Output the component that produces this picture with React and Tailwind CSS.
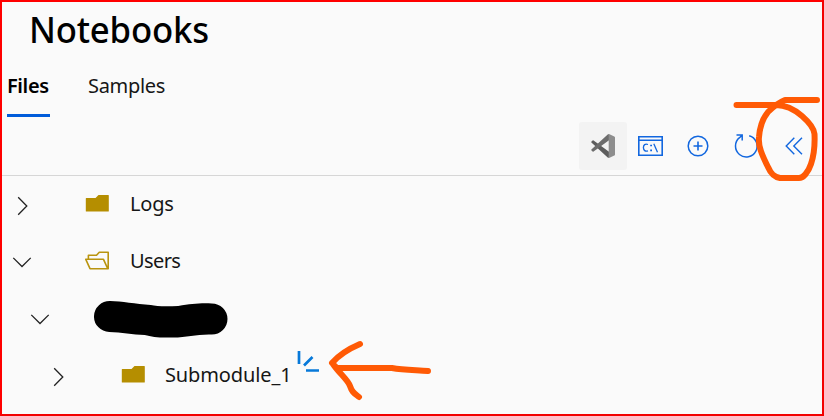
import React from "react";

const Folder = () => (
  <svg className="block h-[20px] w-[26px] shrink-0" viewBox="0 0 26 20">
    <path d="M.8 4.500Q.8 4 1.300 4H10.500L13.500 1H23.300Q23.800 1 23.800 1.500V17Q23.800 17.500 23.300 17.500H1.300Q.8 17.500 .8 17Z" fill="#b58e00" />
  </svg>
);

const OpenFolder = () => (
  <svg className="block h-[20px] w-[26px] shrink-0" viewBox="0 0 26 20" fill="none" stroke="#b9940f" strokeWidth="1.600" strokeLinejoin="round">
    <path d="M3.400 8.300V4.300H11.500L14.300 1.200H23.200V17.700H5L.8 8.300H18.500L22.600 17.300" />
  </svg>
);

const Chevron = ({ down }) => (
  <svg className="block size-[20px] shrink-0" viewBox="0 0 20 20" fill="none" stroke="#222" strokeWidth="1.300">
    {down ? <path d="M1.300 5.900L10 14.500L18.700 5.900" /> : <path d="M5.200 1.300L13.800 10L5.200 18.700" />}
  </svg>
);

const CodeLogo = () => (
  <svg className="size-[24px]" viewBox="0 0 24 24">
    <path d="M.4 8.500Q0 8 .5 7.500L1.600 6.400Q2 6 2.600 6.400L18 17.700V24L16.700 23.400Z" fill="#5d5d5d" />
    <path d="M.4 15.500Q0 16 .5 16.500L1.600 17.600Q2 18 2.600 17.600L18 6.300V0L16.700 .6Z" fill="#6d6d6d" />
    <path d="M18 .1L23.300 2.400Q24 2.700 24 3.500V20.500Q24 21.300 23.300 21.600L18 23.900Q17.200 23.900 16.700 23.300Q17.700 23.500 17.700 22V2Q17.700 .5 16.700 .7Q17.200 0 18 .1Z" fill="#8d8d8d" />
  </svg>
);

const Terminal = () => (
  <svg className="mr-[1px] h-[20px] w-[25px]" viewBox="0 0 25 20" fill="none" stroke="#1267df">
    <path d="M.8.800H24.200V19.200H.8ZM.8 4.300H24.200" strokeWidth="1.600" />
    <path d="M10 8.500Q5.600 7.200 5.400 11.600Q5.700 16 10 14.800M15.800 7.700L19.500 16.200" strokeWidth="1.300" />
    <path d="M12.200 9.500H14M12.200 14.400H14" strokeWidth="1.700" />
  </svg>
);

const AddCircle = () => (
  <svg className="mr-[2px] size-[22px]" viewBox="0 0 22 22" fill="none" stroke="#1267df" strokeWidth="1.500">
    <circle cx="11" cy="11" r="9.800" />
    <path d="M6.500 11H15.500M11 6.500V15.500" strokeWidth="1.600" />
  </svg>
);

const Refresh = () => (
  <svg className="mr-[2px] size-[26px]" viewBox="0 0 26 26" fill="none" stroke="#1267df" strokeWidth="1.500">
    <path d="M16.200 2.700A10.800 10.800 0 1 1 6.500 4.700L9 2.400M3.500 2H9.200V7.500" />
  </svg>
);

const Collapse = () => (
  <svg className="mr-[2px] h-[18px] w-[18px]" viewBox="0 0 18 18" fill="none" stroke="#1267df" strokeWidth="1.400">
    <path d="M9.300 .8L1.200 9L9.300 17.200M17 .8L8.800 9L17 17.200" />
  </svg>
);

export default function App() {
  return (
    <div className="relative h-[416px] w-[824px] overflow-hidden border-2 border-[#ff0000] border-r-[#f20000] border-b-[#f20000] bg-[#fafafa] font-['Noto_Sans',sans-serif] text-[#161616]">
      <header className="h-[60px] pt-[6px] pl-[27px]">
        <h1 className="w-fit origin-left scale-x-[0.964] text-[36px] leading-[44px] font-medium tracking-[-0.2px] text-black">Notebooks</h1>
      </header>
      <nav className="flex h-[55px] pl-[5px] text-[20px]">
        <div className="h-[55px] w-[43px] border-b-[3px] border-[#015cda] pt-[9px] leading-[30px] font-semibold tracking-[-0.4px] text-black">Files</div>
        <div className="ml-[38px] pt-[9px] leading-[30px] tracking-[-0.3px]">Samples</div>
      </nav>
      <div className="flex h-[59px] items-center border-b border-[#d6d6d6] pl-[577px]">
        <div className="flex size-[48px] items-center justify-center rounded-[3px] bg-[#f3f3f3]"><CodeLogo /></div>
        <div className="flex size-[48px] items-center justify-center"><Terminal /></div>
        <div className="flex size-[48px] items-center justify-center"><AddCircle /></div>
        <div className="flex size-[48px] items-center justify-center"><Refresh /></div>
        <div className="flex size-[48px] items-center justify-center"><Collapse /></div>
      </div>
      <main className="-mt-px text-[20px]">
        <div className="flex h-[57px] items-center pl-[11px]">
          <div className="pt-[4px]"><Chevron /></div>
          <div className="ml-[52px]"><Folder /></div>
          <span className="ml-[19px] tracking-[-0.2px]">Logs</span>
        </div>
        <div className="flex h-[57px] items-center pl-[10px]">
          <div className="pt-[2px]"><Chevron down /></div>
          <div className="ml-[53px]"><OpenFolder /></div>
          <span className="ml-[19px] tracking-[-0.6px]">Users</span>
        </div>
        <div className="flex h-[57px] items-center pl-[28px]">
          <div className="pt-[2px]"><Chevron down /></div>
          <svg className="mt-[1px] ml-[44px] h-[40px] w-[134px]" viewBox="0 0 132 40" preserveAspectRatio="none">
            <path d="M16 3C27 3 41 6 56 7Q64 9 83 8C96 6 103 5 116 5.500A15.500 15.500 0 0 1 116 36.500C100 36 91 40 75 39.500Q60 40 50 37C38 37 27 34 15 34A15.500 15.500 0 0 1 16 3Z" fill="#000" />
          </svg>
        </div>
        <div className="flex h-[57px] items-center pl-[47px]">
          <div className="pt-[4px]"><Chevron /></div>
          <div className="ml-[52px]"><Folder /></div>
          <span className="ml-[18px] tracking-[-0.12px]">Submodule_1</span>
          <svg className="mb-[27px] ml-[5px] h-[22px] w-[23px]" viewBox="0 0 23 22" stroke="#0779d9" strokeWidth="2.700">
            <path d="M2 1V14M7 15.500L15.500 7M9 20.500H22" />
          </svg>
        </div>
      </main>
      <svg className="pointer-events-none absolute -top-[2px] -left-[2px] h-[416px] w-[824px]" viewBox="0 0 824 416" fill="none" stroke="#ff5a05" strokeWidth="6" strokeLinecap="round" strokeLinejoin="round">
        <path d="M736.500 105H776C785 105 795 110 802 116C810 123 814 129 814.500 134C815 145 813 158 811 164C808 173 803 178 799 178H780C774 177 771 174 768 167C762 155 758 146 759 137C760 124 764 117 768 112C776 104 780 102 785 100H817" />
        <path d="M360 344C346 350 338 356 332 363L337 368H392C403 370 415 370 428 371M333 364C339 373 348 380 350 386C352 392 354 393 359 397" />
      </svg>
    </div>
  );
}
